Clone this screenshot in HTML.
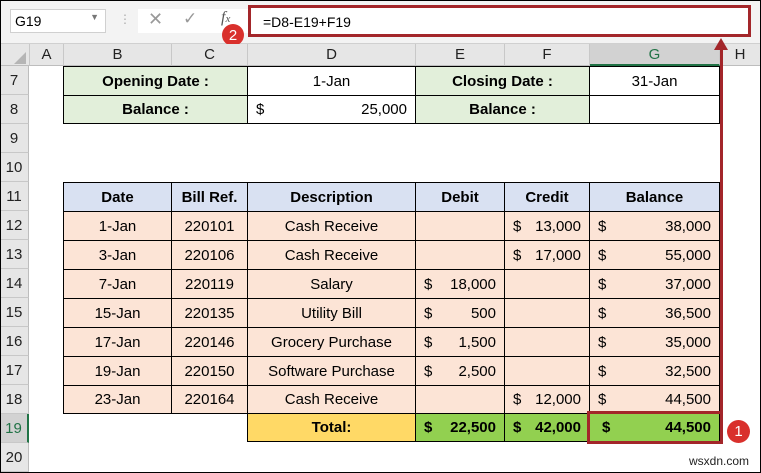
<!DOCTYPE html>
<html><head><meta charset="utf-8"><style>
*{margin:0;padding:0;box-sizing:border-box}
body{width:761px;height:473px;overflow:hidden;background:#fff;font-family:"Liberation Sans",sans-serif;font-size:15px;color:#000;position:relative}
.a{position:absolute}
.c{position:absolute;display:flex;align-items:center;justify-content:center;border:1px solid #000;margin:-1px 0 0 -1px;white-space:nowrap}
.b{font-weight:bold}
.g{background:#e2efda}.h{background:#d9e1f2}.p{background:#fce4d6}.y{background:#ffd966}.t{background:#92d050}
.m{justify-content:space-between;padding:0 8px}
.ch{position:absolute;top:44px;height:22px;background:#e6e6e6;border-right:1px solid #c8c8c8;display:flex;align-items:center;justify-content:center;font-size:15px;color:#222;border-bottom:1px solid #bdbdbd}
.rh{position:absolute;left:0;width:29px;height:29px;background:#e6e6e6;border-bottom:1px solid #c8c8c8;border-right:1px solid #bdbdbd;display:flex;align-items:center;justify-content:center;font-size:15px;color:#222}
</style></head><body>
<div class="a" style="left:0;top:0;width:761px;height:44px;background:#f3f3f3;border-bottom:1px solid #d0d0d0"></div>
<div class="a" style="left:10px;top:9px;width:96px;height:24px;background:#fff;border:1px solid #d0d0d0;font-size:14px;padding:3px 0 0 4px">G19<span style="position:absolute;right:6px;top:2px;font-size:9px;color:#777">▼</span></div>
<div class="a" style="left:119px;top:12px;color:#aaa;font-size:12px">⋮</div>
<div class="a" style="left:138px;top:9px;width:110px;height:24px;background:#fff"></div>
<div class="a" style="left:148px;top:9px;font-size:18px;color:#999">✕</div>
<div class="a" style="left:183px;top:9px;font-size:17px;color:#999">✓</div>
<div class="a" style="left:221px;top:9px;font-size:16px;font-style:italic;font-family:'Liberation Serif',serif;color:#555">f<span style="font-size:11px">x</span></div>
<div class="a" style="left:248px;top:5px;width:503px;height:32px;background:#fff;border:3px solid #a3262a;font-size:14px;padding:6px 0 0 12px">=D8-E19+F19</div>
<div class="a" style="left:222px;top:24px;width:22px;height:22px;border-radius:50%;background:#d9302c;color:#fff;font-size:15px;display:flex;align-items:center;justify-content:center">2</div>
<div class="ch" style="left:0;width:30px"></div>
<div class="a" style="left:14px;top:52px;width:0;height:0;border-left:12px solid transparent;border-bottom:12px solid #b5b5b5"></div>
<div class="ch" style="left:30px;width:34px">A</div>
<div class="ch" style="left:64px;width:108px">B</div>
<div class="ch" style="left:172px;width:76px">C</div>
<div class="ch" style="left:248px;width:168px">D</div>
<div class="ch" style="left:416px;width:89px">E</div>
<div class="ch" style="left:505px;width:85px">F</div>
<div class="ch" style="left:590px;width:130px;background:#d2d2d2;color:#217346;border-bottom:2px solid #217346">G</div>
<div class="ch" style="left:720px;width:41px">H</div>
<div class="rh" style="top:66px">7</div><div class="rh" style="top:95px">8</div><div class="rh" style="top:124px">9</div><div class="rh" style="top:153px">10</div><div class="rh" style="top:182px">11</div><div class="rh" style="top:211px">12</div><div class="rh" style="top:240px">13</div><div class="rh" style="top:269px">14</div><div class="rh" style="top:298px">15</div><div class="rh" style="top:327px">16</div><div class="rh" style="top:356px">17</div><div class="rh" style="top:385px">18</div>
<div class="rh" style="top:414px;background:#d2d2d2;color:#217346;border-right:2px solid #217346">19</div>
<div class="rh" style="top:443px">20</div>
<div class="c g b" style="left:64px;top:67px;width:185px;height:30px">Opening Date :</div>
<div class="c" style="left:248px;top:67px;width:169px;height:30px">1-Jan</div>
<div class="c g b" style="left:416px;top:67px;width:175px;height:30px">Closing Date :</div>
<div class="c" style="left:590px;top:67px;width:131px;height:30px">31-Jan</div>
<div class="c g b" style="left:64px;top:96px;width:185px;height:29px">Balance :</div>
<div class="c m" style="left:248px;top:96px;width:169px;height:29px"><span>$</span><span>25,000</span></div>
<div class="c g b" style="left:416px;top:96px;width:175px;height:29px">Balance :</div>
<div class="c" style="left:590px;top:96px;width:131px;height:29px"></div>
<div class="c h b" style="left:64px;top:183px;width:109px;height:30px">Date</div>
<div class="c h b" style="left:172px;top:183px;width:77px;height:30px">Bill Ref.</div>
<div class="c h b" style="left:248px;top:183px;width:169px;height:30px">Description</div>
<div class="c h b" style="left:416px;top:183px;width:90px;height:30px">Debit</div>
<div class="c h b" style="left:505px;top:183px;width:86px;height:30px">Credit</div>
<div class="c h b" style="left:590px;top:183px;width:131px;height:30px">Balance</div>
<div class="c p" style="left:64px;top:212px;width:109px;height:30px">1-Jan</div><div class="c p" style="left:172px;top:212px;width:77px;height:30px">220101</div><div class="c p" style="left:248px;top:212px;width:169px;height:30px">Cash Receive</div><div class="c p" style="left:416px;top:212px;width:90px;height:30px"></div><div class="c p m" style="left:505px;top:212px;width:86px;height:30px"><span>$</span><span>13,000</span></div><div class="c p m" style="left:590px;top:212px;width:131px;height:30px"><span>$</span><span>38,000</span></div>
<div class="c p" style="left:64px;top:241px;width:109px;height:30px">3-Jan</div><div class="c p" style="left:172px;top:241px;width:77px;height:30px">220106</div><div class="c p" style="left:248px;top:241px;width:169px;height:30px">Cash Receive</div><div class="c p" style="left:416px;top:241px;width:90px;height:30px"></div><div class="c p m" style="left:505px;top:241px;width:86px;height:30px"><span>$</span><span>17,000</span></div><div class="c p m" style="left:590px;top:241px;width:131px;height:30px"><span>$</span><span>55,000</span></div>
<div class="c p" style="left:64px;top:270px;width:109px;height:30px">7-Jan</div><div class="c p" style="left:172px;top:270px;width:77px;height:30px">220119</div><div class="c p" style="left:248px;top:270px;width:169px;height:30px">Salary</div><div class="c p m" style="left:416px;top:270px;width:90px;height:30px"><span>$</span><span>18,000</span></div><div class="c p" style="left:505px;top:270px;width:86px;height:30px"></div><div class="c p m" style="left:590px;top:270px;width:131px;height:30px"><span>$</span><span>37,000</span></div>
<div class="c p" style="left:64px;top:299px;width:109px;height:30px">15-Jan</div><div class="c p" style="left:172px;top:299px;width:77px;height:30px">220135</div><div class="c p" style="left:248px;top:299px;width:169px;height:30px">Utility Bill</div><div class="c p m" style="left:416px;top:299px;width:90px;height:30px"><span>$</span><span>500</span></div><div class="c p" style="left:505px;top:299px;width:86px;height:30px"></div><div class="c p m" style="left:590px;top:299px;width:131px;height:30px"><span>$</span><span>36,500</span></div>
<div class="c p" style="left:64px;top:328px;width:109px;height:30px">17-Jan</div><div class="c p" style="left:172px;top:328px;width:77px;height:30px">220146</div><div class="c p" style="left:248px;top:328px;width:169px;height:30px">Grocery Purchase</div><div class="c p m" style="left:416px;top:328px;width:90px;height:30px"><span>$</span><span>1,500</span></div><div class="c p" style="left:505px;top:328px;width:86px;height:30px"></div><div class="c p m" style="left:590px;top:328px;width:131px;height:30px"><span>$</span><span>35,000</span></div>
<div class="c p" style="left:64px;top:357px;width:109px;height:30px">19-Jan</div><div class="c p" style="left:172px;top:357px;width:77px;height:30px">220150</div><div class="c p" style="left:248px;top:357px;width:169px;height:30px">Software Purchase</div><div class="c p m" style="left:416px;top:357px;width:90px;height:30px"><span>$</span><span>2,500</span></div><div class="c p" style="left:505px;top:357px;width:86px;height:30px"></div><div class="c p m" style="left:590px;top:357px;width:131px;height:30px"><span>$</span><span>32,500</span></div>
<div class="c p" style="left:64px;top:386px;width:109px;height:29px">23-Jan</div><div class="c p" style="left:172px;top:386px;width:77px;height:29px">220164</div><div class="c p" style="left:248px;top:386px;width:169px;height:29px">Cash Receive</div><div class="c p" style="left:416px;top:386px;width:90px;height:29px"></div><div class="c p m" style="left:505px;top:386px;width:86px;height:29px"><span>$</span><span>12,000</span></div><div class="c p m" style="left:590px;top:386px;width:131px;height:29px"><span>$</span><span>44,500</span></div>
<div class="c y b" style="left:248px;top:414px;width:169px;height:29px">Total:</div>
<div class="c t b m" style="left:416px;top:414px;width:90px;height:29px"><span>$</span><span>22,500</span></div>
<div class="c t b m" style="left:505px;top:414px;width:86px;height:29px"><span>$</span><span>42,000</span></div>
<div class="c t b m" style="left:590px;top:414px;width:131px;height:29px;padding:0 8px 0 12px"><span>$</span><span>44,500</span></div>
<div class="a" style="left:587px;top:411px;width:136px;height:33px;border:3px solid #a3262a"></div>
<div class="a" style="left:720px;top:48px;width:3px;height:364px;background:#a3262a"></div>
<div class="a" style="left:714px;top:38px;width:0;height:0;border-left:7px solid transparent;border-right:7px solid transparent;border-bottom:12px solid #a3262a"></div>
<div class="a" style="left:727px;top:420px;width:23px;height:23px;border-radius:50%;background:#d9302c;color:#fff;font-size:15px;display:flex;align-items:center;justify-content:center">1</div>
<div class="a" style="left:689px;top:454px;font-size:12px;color:#222">wsxdn.com</div>
<div class="a" style="left:0;top:0;width:761px;height:473px;border:1px solid #000;pointer-events:none"></div>
</body></html>
